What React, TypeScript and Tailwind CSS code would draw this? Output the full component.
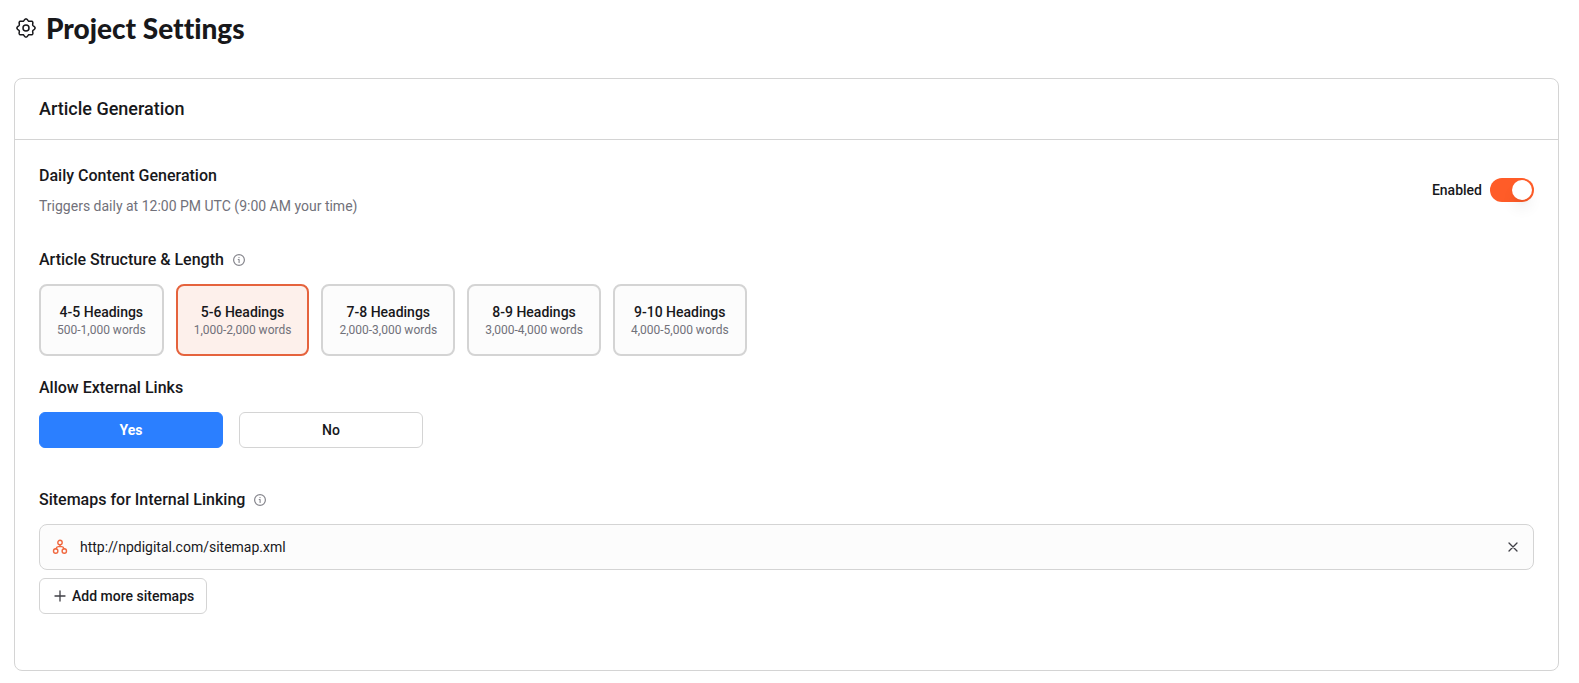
import { useState } from "react";

const lengths = [
  { headings: "4-5 Headings", words: "500-1,000 words" },
  { headings: "5-6 Headings", words: "1,000-2,000 words" },
  { headings: "7-8 Headings", words: "2,000-3,000 words" },
  { headings: "8-9 Headings", words: "3,000-4,000 words" },
  { headings: "9-10 Headings", words: "4,000-5,000 words" },
];

// Outline of an eight-lobed cog centred in a 24-unit box.
const gearPoints = Array.from({ length: 128 }, (_, i) => {
  const angle = (i / 128) * Math.PI * 2;
  const radius = 8.2 + 0.9 * Math.cos(8 * angle);
  return `${(12 + radius * Math.sin(angle)).toFixed(2)},${(12 - radius * Math.cos(angle)).toFixed(2)}`;
}).join(" ");

function GearIcon() {
  return (
    <svg className="size-6" viewBox="0 0 24 24" fill="none" stroke="currentColor" strokeWidth="1.5" strokeLinejoin="round" aria-hidden="true">
      <polygon points={gearPoints} />
      <circle cx="12" cy="12" r="3" />
    </svg>
  );
}

function InfoIcon() {
  return (
    <svg className="size-3.5" viewBox="0 0 14 14" fill="none" stroke="currentColor" aria-hidden="true">
      <circle cx="7" cy="7" r="5.4" strokeWidth="1.2" />
      <path d="M6.2 6.5H7.1V9.4" strokeWidth="1.1" strokeLinecap="round" strokeLinejoin="round" />
      <circle cx="7" cy="4.6" r="0.7" fill="currentColor" stroke="none" />
    </svg>
  );
}

function SitemapIcon() {
  return (
    <svg className="size-4 text-[#f0683f]" viewBox="0 0 16 16" fill="none" stroke="currentColor" strokeWidth="1.4" strokeLinecap="round" strokeLinejoin="round" aria-hidden="true">
      <circle cx="8" cy="3.5" r="2.2" />
      <circle cx="3.7" cy="12" r="2.2" />
      <circle cx="12.3" cy="12" r="2.2" />
      <path d="M8 5.7V7.6M4 9.8C4.3 8.3 4.8 7.6 6.2 7.6H9.8C11.2 7.6 11.7 8.3 12 9.8" />
    </svg>
  );
}

function InfoButton({ label }: { label: string }) {
  return (
    <button type="button" aria-label={label} className="text-[#85858c]">
      <InfoIcon />
    </button>
  );
}

export default function App() {
  const [enabled, setEnabled] = useState(true);
  const [length, setLength] = useState(1);
  const [external, setExternal] = useState(true);
  const [sitemaps, setSitemaps] = useState(["http://npdigital.com/sitemap.xml"]);

  return (
    <main className="bg-white pt-2.5 pr-5 pb-3 pl-3.5 font-['Roboto',sans-serif] text-[#18181b]">
      <header className="flex items-center gap-2">
        <GearIcon />
        <h1 className="font-['Lato',sans-serif] text-[28px] leading-9 font-black [font-variant-ligatures:none]">Project Settings</h1>
      </header>

      <section className="mt-8 rounded-lg border border-[#d4d4d4]">
        <div className="border-b border-[#d4d4d4] px-6 py-4">
          <h2 className="text-lg leading-7 font-medium">Article Generation</h2>
        </div>

        <div className="px-6 pt-6 pb-14">
          <div className="flex items-center justify-between">
            <div>
              <h3 className="text-base leading-6 font-medium">Daily Content Generation</h3>
              <p className="mt-2 text-sm leading-5 text-[#71717a]">Triggers daily at 12:00 PM UTC (9:00 AM your time)</p>
            </div>
            <label className="flex cursor-pointer items-center gap-2 text-sm font-medium">
              Enabled
              <input
                type="checkbox"
                role="switch"
                checked={enabled}
                onChange={(e) => setEnabled(e.target.checked)}
                className="h-6 w-11 cursor-pointer appearance-none rounded-full bg-zinc-300 p-0.5 before:block before:size-5 before:rounded-full before:bg-white before:shadow-lg checked:bg-[#ff5c28] checked:before:ml-5"
              />
            </label>
          </div>

          <div className="mt-8 flex items-center gap-2">
            <h3 className="text-base leading-6 font-medium">Article Structure &amp; Length</h3>
            <InfoButton label="About article structure and length" />
          </div>
          <div className="mt-3 flex flex-wrap gap-3">
            {lengths.map((item, i) => (
              <button
                key={item.headings}
                type="button"
                aria-pressed={i === length}
                onClick={() => setLength(i)}
                className={
                  "rounded-lg border-2 p-4 text-center " +
                  (i === length ? "border-[#e5633d] bg-[#fdf0eb]" : "border-[#d4d4d4] bg-[#fcfcfc]")
                }
              >
                <span className="block text-sm leading-5 font-medium">{item.headings}</span>
                <span className="block text-xs leading-4 text-[#71717a]">{item.words}</span>
              </button>
            ))}
          </div>

          <h3 className="mt-5 text-base leading-6 font-medium">Allow External Links</h3>
          <div className="mt-3 grid max-w-96 grid-cols-2 gap-4">
            {[true, false].map((value) => (
              <button
                key={String(value)}
                type="button"
                aria-pressed={external === value}
                onClick={() => setExternal(value)}
                className={
                  "h-9 rounded-md border text-sm " +
                  (external === value
                    ? "border-[#2b7fff] bg-[#2b7fff] font-bold text-white"
                    : "border-[#d4d4d4] bg-white font-medium")
                }
              >
                {value ? "Yes" : "No"}
              </button>
            ))}
          </div>

          <div className="mt-10 flex items-center gap-2">
            <h3 className="text-base leading-6 font-medium">Sitemaps for Internal Linking</h3>
            <InfoButton label="About sitemaps" />
          </div>
          <ul className="mt-3">
            {sitemaps.map((url) => (
              <li key={url} className="mb-2 flex items-center gap-3 rounded-lg border border-[#d4d4d4] bg-[#fcfcfc] px-3 py-3">
                <SitemapIcon />
                <span className="grow text-sm leading-5">{url}</span>
                <button
                  type="button"
                  aria-label="Remove sitemap"
                  onClick={() => setSitemaps(sitemaps.filter((s) => s !== url))}
                  className="text-[#3f3f46]"
                >
                  <svg className="size-4" viewBox="0 0 16 16" fill="none" stroke="currentColor" strokeWidth="1.3" strokeLinecap="round" aria-hidden="true">
                    <path d="M4 4L12 12M12 4L4 12" />
                  </svg>
                </button>
              </li>
            ))}
          </ul>
          <button type="button" className="flex h-9 items-center gap-1 rounded-md border border-[#d4d4d4] bg-white px-3 text-sm font-medium">
            <svg className="size-4 text-[#3f3f46]" viewBox="0 0 16 16" fill="none" stroke="currentColor" strokeWidth="1.3" strokeLinecap="round" aria-hidden="true">
              <path d="M8 3V13M3 8H13" />
            </svg>
            Add more sitemaps
          </button>
        </div>
      </section>
    </main>
  );
}
